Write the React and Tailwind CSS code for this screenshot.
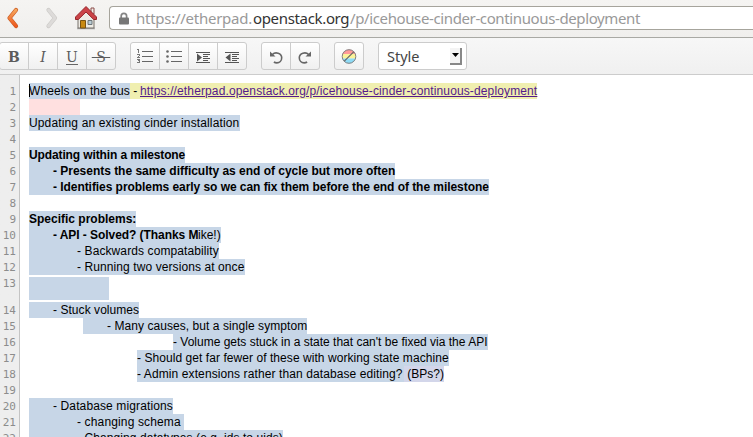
import React from "react";

const BLUE = "bg-[#c7d6e7]";

// Each line: gutter number, left offset of the highlight, and its runs.
const lines = [
  {
    n: 1,
    runs: [
      { t: "Wheels on the bus", c: `${BLUE} w-[101px] tracking-[0.09px]` },
      { t: " - ", c: "bg-[#f0efb0] w-[10px]" },
      {
        t: "https://etherpad.openstack.org/p/icehouse-cinder-continuous-deployment",
        c: "bg-[#f0efb0] w-[397px] text-[#551a8b] underline tracking-[0.13px]",
      },
    ],
  },
  { n: 2, runs: [{ t: "", c: "bg-[#ffe0e0] w-[51px]" }] },
  { n: 3, runs: [{ t: "Updating an existing cinder installation", c: `${BLUE} w-[211px] tracking-[0.14px]` }] },
  { n: 4, runs: [] },
  { n: 5, runs: [{ t: "Updating within a milestone", c: `${BLUE} w-[156px] font-bold tracking-[-0.12px]` }] },
  { n: 6, runs: [{ t: "- Presents the same difficulty as end of cycle but more often", c: `${BLUE} w-[366px] pl-6 font-bold tracking-[-0.02px]` }] },
  { n: 7, runs: [{ t: "- Identifies problems early so we can fix them before the end of the milestone", c: `${BLUE} w-[460px] pl-6 font-bold tracking-[-0.055px]` }] },
  { n: 8, runs: [] },
  { n: 9, runs: [{ t: "Specific problems:", c: `${BLUE} w-[107px] font-bold` }] },
  {
    n: 10,
    runs: [
      { t: "- API - Solved? (Thanks M", c: `${BLUE} w-[169px] pl-6 font-bold tracking-[-0.06px]` },
      { t: "ike!)", c: `${BLUE} w-[23px]` },
    ],
  },
  { n: 11, runs: [{ t: "- Backwards compatability", c: `${BLUE} w-[190px] pl-12 tracking-[0.1px]` }] },
  { n: 12, runs: [{ t: "- Running two versions at once", c: `${BLUE} w-[216px] pl-12 tracking-[0.09px]` }] },
  { n: 13, tall: true, runs: [{ t: "", c: `${BLUE} w-[80px] h-[23px] mt-[2px]` }] },
  { n: 14, runs: [{ t: "- Stuck volumes", c: `${BLUE} w-[110px] pl-6 tracking-[0.05px]` }] },
  { n: 15, indent: "ml-[54px]", runs: [{ t: "- Many causes, but a single symptom", c: `${BLUE} w-[224px] pl-6 tracking-[0.06px]` }] },
  { n: 16, indent: "ml-[144px]", runs: [{ t: "- Volume gets stuck in a state that can't be fixed via the API", c: `${BLUE} w-[315px]` }] },
  { n: 17, indent: "ml-[108px]", runs: [{ t: "- Should get far fewer of these with working state machine", c: `${BLUE} w-[312px] tracking-[0.06px]` }] },
  {
    n: 18,
    indent: "ml-[108px]",
    runs: [
      { t: "- Admin extensions rather than database editing?", c: `${BLUE} w-[267px] tracking-[0.1px]` },
      { t: " (BPs?)", c: "bg-[#d3d6ea] w-[40px]" },
    ],
  },
  { n: 19, runs: [] },
  { n: 20, runs: [{ t: "- Database migrations", c: `${BLUE} w-[144px] pl-6 tracking-[0.12px]` }] },
  { n: 21, runs: [{ t: "- changing schema", c: `${BLUE} w-[155px] pl-12 tracking-[0.14px]` }] },
  { n: 22, runs: [{ t: "- Changing datatypes (e.g. ids to uids)", c: `${BLUE} w-[254px] pl-12 tracking-[0.08px]` }] },
];

function Line({ line }) {
  return (
    <div className={`flex ${line.tall ? "h-[27px]" : "h-4"}`}>
      <div className="h-full w-[19px] shrink-0 pr-[3px] text-right font-['DejaVu_Sans_Mono',monospace] text-[11px] leading-[17px] text-[#8c8c8c]">
        {line.n}
      </div>
      <div className={`flex pl-[10px] ${line.indent || ""}`}>
        {line.runs.map((r, i) => (
          <span key={i} className={`block h-4 shrink-0 whitespace-pre ${r.c}`}>
            {r.t}
          </span>
        ))}
      </div>
    </div>
  );
}

function Group({ children }) {
  return (
    <div className="flex h-[28px] divide-x divide-[#ccc] rounded-[3px] border border-[#ccc] bg-linear-to-b from-white to-[#f0f0f0]">
      {children}
    </div>
  );
}

function Btn({ children }) {
  return (
    <button className="flex w-[29px] items-center justify-center last:w-[28px]">
      {children}
    </button>
  );
}

const letter = "mt-[2px] font-['DejaVu_Serif',serif] text-[14px] leading-[14px] text-[#5c5c5c]";

function OrderedIcon() {
  return (
    <svg width="16" height="16" viewBox="0 0 16 16" shapeRendering="crispEdges">
      <path d="M5 3h11v1H5zM5 8h11v1H5zM5 13h11v1H5z" fill="#666" />
      <path d="M1 1h1v4H1zM0 1h1v1H0zM0 6h3v1H0zM2 7h1v1H2zM1 8h1v1H1zM0 9h3v1H0zM0 11h3v1H0zM1 12h2v1H1zM2 13h1v1H2zM0 14h3v1H0z" fill="#777" />
    </svg>
  );
}

function BulletIcon() {
  return (
    <svg width="16" height="16" viewBox="0 0 16 16" fill="#666">
      <path d="M5 3h11v1H5zM5 8h11v1H5zM5 13h11v1H5z" />
      <circle cx="1.5" cy="3.5" r="1.3" />
      <circle cx="1.5" cy="8.5" r="1.3" />
      <circle cx="1.5" cy="13.5" r="1.3" />
    </svg>
  );
}

function IndentIcon({ out }) {
  return (
    <svg width="14" height="14" viewBox="0 0 14 14" fill="#555" className="mt-px">
      <path d="M0 2h14v1H0zM7 4h7v1H7zM7 6h5v1H7zM7 8h7v1H7zM7 10h5v1H7zM0 12h14v1H0z" />
      <path d={out ? "M5.500 3.500v8L.500 7.500z" : "M1 3.500v8l5-4z"} />
    </svg>
  );
}

function UndoIcon({ flip }) {
  return (
    <svg width="14" height="14" viewBox="0 0 14 14" fill="none" className={`mt-px ${flip ? "-scale-x-100" : ""}`}>
      <path d="M3.400 4.500C6.200 1.500 12.700 2.800 12.700 7.800c0 3-2.200 5.100-4.800 5.100-1.300 0-2.200-.3-3-.9" stroke="#666" strokeWidth="1.600" />
      <path d="M1 1.500v5h5.500z" fill="#666" />
    </svg>
  );
}

function ColorsIcon() {
  return (
    <svg width="16" height="16" viewBox="0 0 16 16">
      <clipPath id="disc"><circle cx="8" cy="8.500" r="7" /></clipPath>
      <g clipPath="url(#disc)">
        <path fill="#ff9a9a" d="M0 0h16v6H0z" />
        <path fill="#fbf39a" d="M0 6h16v4.500H0z" />
        <path fill="#8edcf7" d="M0 10.500h16V16H0z" />
      </g>
      <circle cx="8" cy="8.500" r="6.800" fill="none" stroke="#808080" strokeWidth="1" />
      <path d="M3.300 13.200l9.400-9.400" stroke="#666" strokeWidth="1.200" />
    </svg>
  );
}

function BrowserBar() {
  return (
    <div className="flex h-[38px] border-b border-[#a9a9a4] bg-linear-to-b from-[#f5f4f2] to-[#f0efed]">
      <svg className="mt-[7px] ml-[6px] shrink-0" width="13" height="22" viewBox="0 0 13 22" fill="none" strokeLinecap="round" strokeLinejoin="round">
        <defs>
          <linearGradient id="back" x1="0" y1="0" x2="0" y2="1">
            <stop offset="0" stopColor="#f5a55c" />
            <stop offset="1" stopColor="#ee5a20" />
          </linearGradient>
        </defs>
        <path d="M10 3 3.500 11l6.500 8" stroke="#c95a22" strokeWidth="4.200" />
        <path d="M10 3 3.500 11l6.500 8" stroke="url(#back)" strokeWidth="2.800" />
      </svg>
      <svg className="mt-[7px] ml-[26px] shrink-0" width="13" height="22" viewBox="0 0 13 22" fill="none" strokeLinecap="round" strokeLinejoin="round">
        <path d="M3.500 3l6.500 8-6.500 8" stroke="#cccac7" strokeWidth="4.200" />
        <path d="M3.500 3l6.500 8-6.500 8" stroke="#dddbd9" strokeWidth="2.800" />
      </svg>
      <svg className="mt-[5px] ml-[16px] shrink-0" width="24" height="25" viewBox="0 0 24 25">
        <path d="M3 23.500h18" stroke="#aaa" strokeWidth="1.500" />
        <path d="M4 12l8-8 8 8v11H4z" fill="#eeebe4" stroke="#77716a" />
        <path d="M17 3h3v6h-3z" fill="#f3f0ea" stroke="#8b4b48" />
        <path d="M12 1.500 1.500 12v2.500h2.800L12 7l7.700 7.500h2.800V12z" fill="#cb4347" stroke="#97262b" strokeLinejoin="round" />
        <path d="M6.500 15.500h5V23h-5z" fill="#c98a12" stroke="#7b5412" />
        <path d="M14 15.500h4v4h-4z" fill="#b8cbd3" stroke="#6c767b" />
      </svg>
      <div className="mt-[6px] ml-[11px] flex h-[24px] flex-1 items-center rounded-l-[4px] border border-r-0 border-[#a6a49c] bg-white pl-2">
        <svg width="12" height="13" viewBox="0 0 12 13" className="shrink-0">
          <path d="M3.200 7V4a2.700 2.700 0 0 1 5.400 0v3" fill="none" stroke="#858585" strokeWidth="1.700" />
          <rect x="1" y="5.500" width="10" height="7" rx="1" fill="#777" />
        </svg>
        <span className="ml-[6px] flex whitespace-pre font-['Noto_Sans',sans-serif] text-[15px] leading-[22px] text-[#999]">
          <span className="w-[117px] tracking-[-0.26px]">https://etherpad.</span>
          <span className="w-[97px] tracking-[-0.34px] text-[#333]">openstack.org</span>
          <span className="tracking-[-0.38px]">/p/icehouse-cinder-continuous-deployment</span>
        </span>
      </div>
    </div>
  );
}

function Toolbar() {
  return (
    <div className="flex h-[37px] border-b border-[#ccc] bg-linear-to-b from-[#f7f7f7] to-[#f0f0f0] pt-[4px]">
      <div className="-ml-px">
        <Group>
          <Btn><span className={`${letter} font-bold`}>B</span></Btn>
          <Btn><span className={`${letter} italic`}>I</span></Btn>
          <Btn><span className={`${letter} border-b border-[#666]`}>U</span></Btn>
          <Btn><span className={`${letter} line-through`}>&nbsp;S&nbsp;</span></Btn>
        </Group>
      </div>
      <div className="ml-[14px]">
        <Group>
          <Btn><OrderedIcon /></Btn>
          <Btn><BulletIcon /></Btn>
          <Btn><IndentIcon /></Btn>
          <Btn><IndentIcon out /></Btn>
        </Group>
      </div>
      <div className="ml-[14px]">
        <Group>
          <Btn><UndoIcon /></Btn>
          <Btn><UndoIcon flip /></Btn>
        </Group>
      </div>
      <div className="ml-[14px]">
        <Group>
          <Btn><ColorsIcon /></Btn>
        </Group>
      </div>
      <div className="ml-[14px] flex h-[28px] w-[89px] items-center justify-between rounded-[3px] border border-[#ccc] bg-white pr-[4px] pl-[8px]">
        <span className="font-['Noto_Sans',sans-serif] text-[14.5px] leading-none text-[#444]">Style</span>
        <span className="flex h-[17px] w-[12px] items-center justify-center border-r-2 border-b-2 border-[#888] bg-[#f4f4f4]">
          <svg width="7" height="4" viewBox="0 0 7 4"><path d="M0 0h7L3.500 4z" /></svg>
        </span>
      </div>
    </div>
  );
}

export default function App() {
  return (
    <div className="flex h-[437px] w-[753px] flex-col overflow-hidden bg-white">
      <BrowserBar />
      <Toolbar />
      <div className="relative h-[362px] overflow-hidden bg-linear-to-r from-[#eee] from-[19px] to-white to-[19px] pt-[8px] font-['Liberation_Sans',Arial,sans-serif] text-[12px] leading-4 text-black">
        <div className="absolute top-0 left-[19px] h-full w-px bg-[#c4c4c4]" />
        <div className="absolute top-[9px] left-[29px] h-[13px] w-px bg-black" />
        {lines.map((l) => (
          <Line key={l.n} line={l} />
        ))}
      </div>
    </div>
  );
}
